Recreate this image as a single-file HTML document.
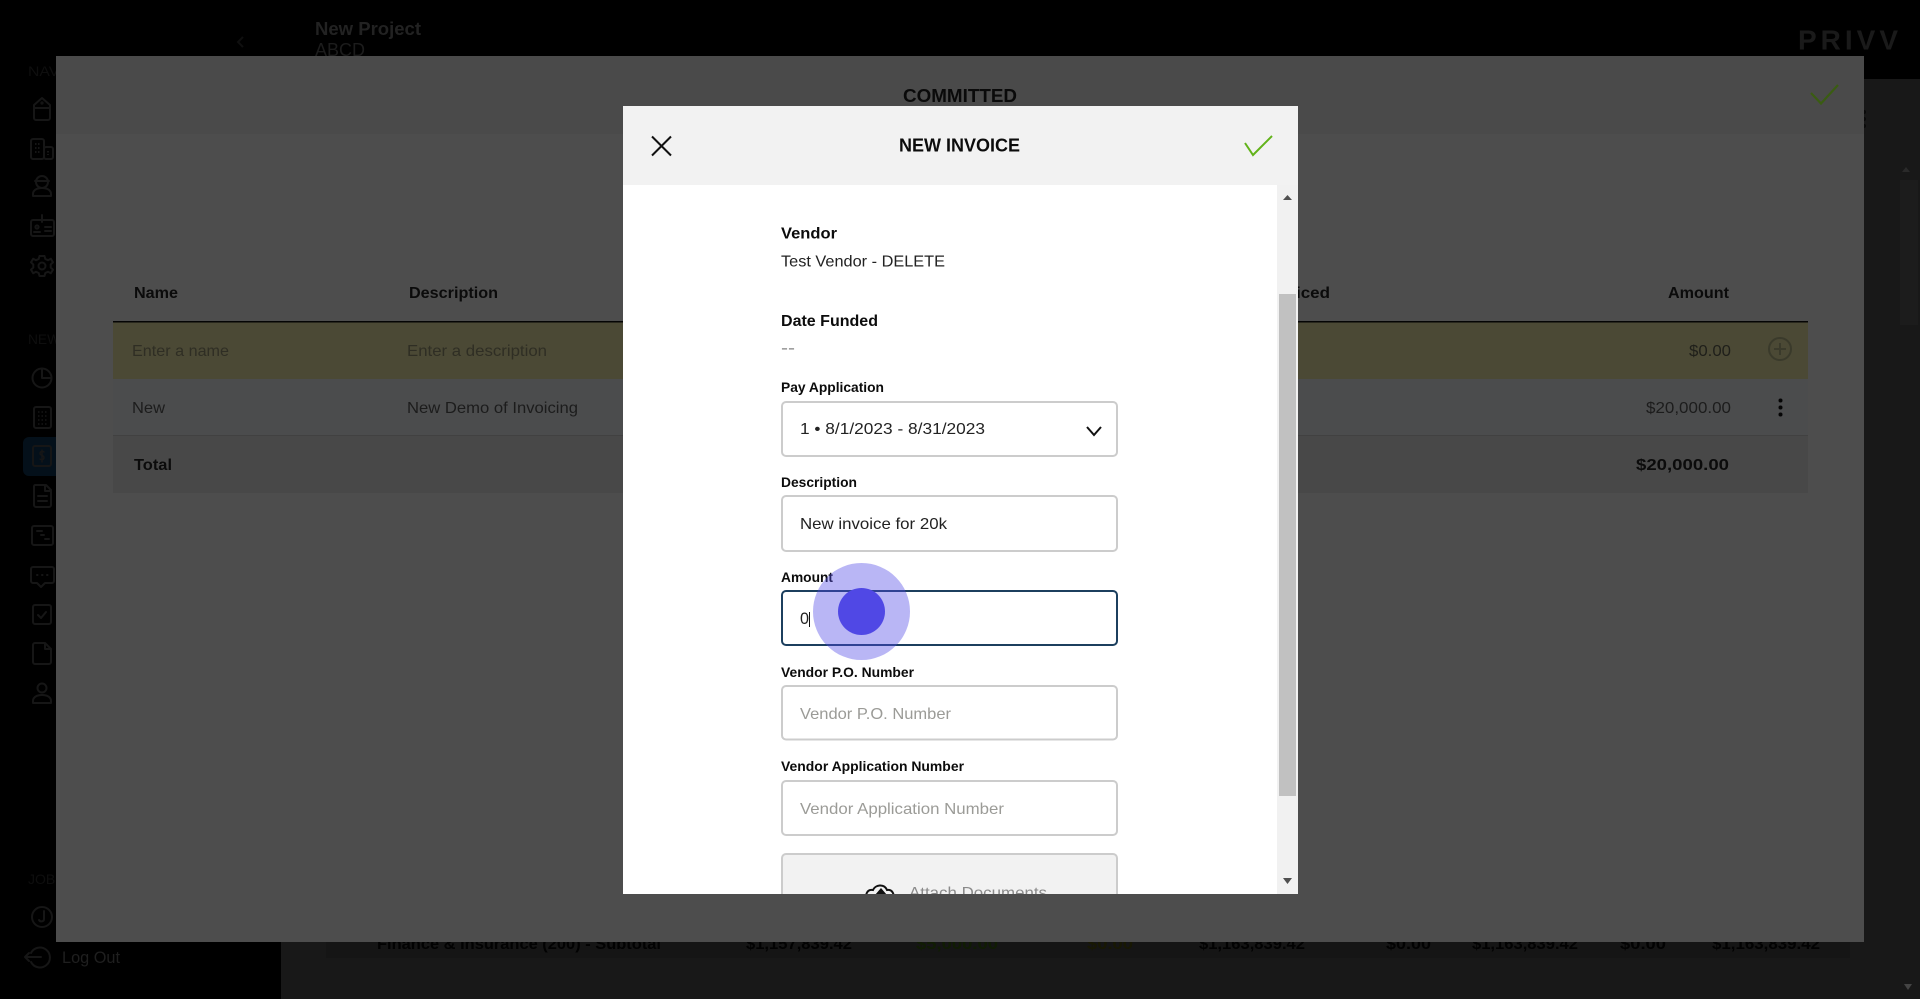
<!DOCTYPE html>
<html lang="en">
<head>
<meta charset="utf-8">
<title>New Invoice</title>
<style>
html,body{margin:0;padding:0;width:1920px;height:999px;overflow:hidden;background:#000}
svg{display:block}
text{font-family:"Liberation Sans",sans-serif;font-size:16px}
.b{font-weight:700}
.ic{fill:none;stroke:#161616;stroke-width:2;stroke-linecap:round;stroke-linejoin:round}
.lbl{font-size:14px;font-weight:700;fill:#0c0c0c}
.val{fill:#222}
.ph{fill:#9b9b97}
.box{fill:#fff;stroke:#ccc;stroke-width:2}
</style>
</head>
<body>
<svg width="1920" height="999" viewBox="0 0 1920 999" xmlns="http://www.w3.org/2000/svg">
<defs>
<clipPath id="inner"><rect x="623" y="106" width="675" height="788"/></clipPath>
</defs>

<!-- page background -->
<rect width="1920" height="999" fill="#181818"/>
<rect width="1920" height="79" fill="#000"/>
<rect width="281" height="999" fill="#000"/>

<!-- top bar -->
<path d="M243 37l-5 5 5 5" fill="none" stroke="#0f0f0f" stroke-width="2"/>
<text x="315" y="35" class="b" style="font-size:18px" fill="#222" textLength="106" lengthAdjust="spacingAndGlyphs">New Project</text>
<text x="315" y="56" style="font-size:18px" fill="#1c1c1c" textLength="50" lengthAdjust="spacingAndGlyphs">ABCD</text>
<text x="1798" y="49.500" class="b" style="font-size:28px;font-weight:700" fill="#1a1a1a" textLength="100" lengthAdjust="spacing">PRIVV</text>

<!-- main scrollbar and dots behind the modal -->
<rect x="1900" y="180" width="18" height="145" fill="#1c1c1c"/>
<path d="M1902 172l4-5 4 5z" fill="#2a2a2a"/>
<path d="M1904 984l4 6 4-6z" fill="#444"/>
<circle cx="1864" cy="112" r="2" fill="#0a0a0a"/><circle cx="1864" cy="119" r="2" fill="#0a0a0a"/><circle cx="1864" cy="126" r="2" fill="#0a0a0a"/>

<!-- subtotal row behind the modal -->
<rect x="326" y="900" width="1524" height="58" fill="#151515"/>
<text x="377" y="949" class="b" fill="#020202" textLength="284" lengthAdjust="spacingAndGlyphs">Finance &amp; Insurance (200) - Subtotal</text>
<text x="746" y="949" class="b" fill="#020202" textLength="106" lengthAdjust="spacingAndGlyphs">$1,157,839.42</text>
<text x="916" y="949" class="b" fill="#101c03" textLength="82" lengthAdjust="spacingAndGlyphs">$5,000.00</text>
<text x="1087" y="949" class="b" fill="#181803" textLength="46" lengthAdjust="spacingAndGlyphs">$0.00</text>
<text x="1199" y="949" class="b" fill="#020202" textLength="106" lengthAdjust="spacingAndGlyphs">$1,163,839.42</text>
<text x="1386" y="949" class="b" fill="#020202" textLength="45" lengthAdjust="spacingAndGlyphs">$0.00</text>
<text x="1472" y="949" class="b" fill="#020202" textLength="106" lengthAdjust="spacingAndGlyphs">$1,163,839.42</text>
<text x="1620" y="949" class="b" fill="#020202" textLength="46" lengthAdjust="spacingAndGlyphs">$0.00</text>
<text x="1712" y="949" class="b" fill="#020202" textLength="108" lengthAdjust="spacingAndGlyphs">$1,163,839.42</text>

<!-- sidebar -->
<text x="28" y="76" style="font-size:14px" fill="#0e0e0e" textLength="95" lengthAdjust="spacingAndGlyphs">NAVIGATION</text>
<text x="28" y="344" style="font-size:14px" fill="#0e0e0e" textLength="100" lengthAdjust="spacingAndGlyphs">NEW PROJECT</text>
<text x="28" y="884" style="font-size:14px" fill="#0e0e0e" textLength="70" lengthAdjust="spacingAndGlyphs">JOB COST</text>
<rect x="23" y="437" width="60" height="39" rx="6" fill="#04101a"/>
<g class="ic">
  <!-- tag -->
  <path d="M34 105l8-7 8 7v13a2 2 0 0 1-2 2H36a2 2 0 0 1-2-2z"/><path d="M34 108h16"/><circle cx="42" cy="103" r=".6"/>
  <!-- buildings -->
  <rect x="31" y="139" width="13" height="20" rx="2"/><rect x="44" y="147" width="9" height="12" rx="2"/><path d="M35 144h5M35 148h5M35 152h5M48 151v4" stroke-dasharray="1.500 1.500" stroke-linecap="butt"/>
  <!-- worker -->
  <circle cx="42" cy="182" r="6"/><path d="M35 181h14M33 196v-2c0-4 4-6 9-6s9 2 9 6v2z"/>
  <!-- id card -->
  <rect x="31" y="220" width="23" height="16" rx="2"/><path d="M42 215v7M45 227h6M45 231h6"/><circle cx="37" cy="227" r="1.600"/><path d="M34 232h6"/>
  <!-- gear -->
  <circle cx="42" cy="266" r="3.500"/><path d="M39.500 256h5l.8 3 2.700 1.200 2.800-1.500 2.200 3.600-2.300 2.200v3l2.300 2.200-2.200 3.600-2.800-1.500-2.700 1.200-.8 3h-5l-.8-3-2.700-1.200-2.800 1.500-2.200-3.600 2.300-2.200v-3l-2.300-2.200 2.200-3.600 2.800 1.500 2.700-1.200z"/>
  <!-- pie -->
  <circle cx="42" cy="378" r="9.500"/><path d="M42 369v9h9"/>
  <!-- calculator -->
  <rect x="34" y="407" width="17" height="21" rx="2"/><path d="M38 412h9M38 416h9M38 420h9M38 424h9" stroke-dasharray="1.500 2" stroke-linecap="butt" stroke-width="1.500"/>
  <!-- dollar -->
  <rect x="33" y="446" width="18" height="20" rx="2"/><path d="M44 452c-1-1-4-1-4 1.500s4 1.500 4 4-3 2.500-4 1.500M42 450v12" stroke-width="1.500"/>
  <!-- doc lines -->
  <path d="M35 485h11l5 5v15a2 2 0 0 1-2 2H36a2 2 0 0 1-2-2v-18a2 2 0 0 1 1-2z"/><path d="M45 485v6h6M38 496h9M38 501h9"/>
  <!-- terminal -->
  <rect x="32" y="526" width="21" height="19" rx="2"/><path d="M37 531h5M41 535h3M45 539h4"/>
  <!-- chat -->
  <path d="M33 567h19a2 2 0 0 1 2 2v12a2 2 0 0 1-2 2h-7l-4 4-4-4h-4a2 2 0 0 1-2-2v-12a2 2 0 0 1 2-2z"/><path d="M37 575h.5M42 575h.5M47 575h.5"/>
  <!-- check -->
  <rect x="33" y="605" width="18" height="19" rx="2"/><path d="M38 615l3 3 5-6"/>
  <!-- doc -->
  <path d="M35 643h10l6 6v13a2 2 0 0 1-2 2H35a2 2 0 0 1-2-2v-17a2 2 0 0 1 2-2z"/><path d="M45 643v6h6"/>
  <!-- person -->
  <circle cx="42" cy="688" r="4.500"/><path d="M33 703v-2c0-4 4-6 9-6s9 2 9 6v2z"/>
  <!-- J avatar -->
  <circle cx="42" cy="917" r="10"/><path d="M44 911v8c0 3-4 3-5 1"/>
  <!-- logout -->
  <path d="M31 953a10 10 0 1 1 0 9M25 957h16M25 957l4-4M25 957l4 4"/>
</g>
<text x="62" y="963" style="font-size:17px" fill="#1f1f1f" textLength="58" lengthAdjust="spacingAndGlyphs">Log Out</text>

<!-- outer modal -->
<rect x="56" y="56" width="1808" height="886" fill="#4d4d4d"/>
<rect x="56" y="56" width="1808" height="78" fill="#4a4a4a"/>
<text x="903" y="102" class="b" style="font-size:18px" fill="#0a0a0a" textLength="114" lengthAdjust="spacingAndGlyphs">COMMITTED</text>
<path d="M1811 93l10 10.500 17-18.500" fill="none" stroke="#3a5c12" stroke-width="2.200"/>

<!-- table -->
<text x="134" y="298" class="b" fill="#0b0b0b" textLength="44" lengthAdjust="spacingAndGlyphs">Name</text>
<text x="409" y="298" class="b" fill="#0b0b0b" textLength="89" lengthAdjust="spacingAndGlyphs">Description</text>
<text x="1296" y="298" class="b" fill="#0b0b0b" textLength="34" lengthAdjust="spacingAndGlyphs">iced</text>
<text x="1668" y="298" class="b" fill="#0b0b0b" textLength="61" lengthAdjust="spacingAndGlyphs">Amount</text>
<rect x="113" y="322" width="1695" height="57" fill="#4b4935"/>
<rect x="113" y="321" width="1695" height="1.500" fill="#050505"/>
<text x="132" y="356" fill="#2f2e24" textLength="97" lengthAdjust="spacingAndGlyphs">Enter a name</text>
<text x="407" y="356" fill="#2f2e24" textLength="140" lengthAdjust="spacingAndGlyphs">Enter a description</text>
<text x="1689" y="356" fill="#1f1f1a" textLength="42" lengthAdjust="spacingAndGlyphs">$0.00</text>
<circle cx="1780" cy="349" r="11" fill="none" stroke="#3a3a2b" stroke-width="2"/>
<path d="M1780 343v12M1774 349h12" stroke="#3a3a2b" stroke-width="2"/>
<rect x="113" y="379" width="1695" height="56" fill="#4b4c4d"/>
<text x="132" y="413" fill="#1c1c1c" textLength="33" lengthAdjust="spacingAndGlyphs">New</text>
<text x="407" y="413" fill="#1c1c1c" textLength="171" lengthAdjust="spacingAndGlyphs">New Demo of Invoicing</text>
<text x="1646" y="413" fill="#1c1c1c" textLength="85" lengthAdjust="spacingAndGlyphs">$20,000.00</text>
<circle cx="1780.500" cy="400.500" r="2" fill="#050505"/><circle cx="1780.500" cy="407.500" r="2" fill="#050505"/><circle cx="1780.500" cy="414.500" r="2" fill="#050505"/>
<rect x="113" y="435" width="1695" height="1" fill="#414141"/>
<rect x="113" y="436" width="1695" height="57" fill="#484848"/>
<text x="134" y="470" class="b" fill="#0b0b0b" textLength="38" lengthAdjust="spacingAndGlyphs">Total</text>
<text x="1636" y="470" class="b" fill="#0b0b0b" textLength="93" lengthAdjust="spacingAndGlyphs">$20,000.00</text>

<!-- inner modal -->
<g clip-path="url(#inner)">
<rect x="623" y="106" width="675" height="788" fill="#fff"/>
<rect x="623" y="106" width="675" height="79" fill="#f2f2f2"/>
<path d="M652 136.500l19 19M671 136.500l-19 19" stroke="#111" stroke-width="2" fill="none"/>
<text x="899" y="151.500" class="b" style="font-size:18px" fill="#0c0c0c" textLength="121" lengthAdjust="spacingAndGlyphs">NEW INVOICE</text>
<path d="M1245 143l8 12 19-19" fill="none" stroke="#62b31a" stroke-width="2"/>

<!-- scrollbar -->
<rect x="1277" y="185" width="21" height="709" fill="#f1f1f1"/>
<rect x="1279" y="294" width="17" height="502" fill="#c1c1c1"/>
<path d="M1283 200l4.500-5 4.500 5z" fill="#505050"/>
<path d="M1283 878l4.500 6 4.500-6z" fill="#505050"/>

<text x="781" y="238.500" class="b" fill="#0c0c0c" textLength="56" lengthAdjust="spacingAndGlyphs">Vendor</text>
<text x="781" y="266.500" class="val" textLength="164" lengthAdjust="spacingAndGlyphs">Test Vendor - DELETE</text>
<text x="781" y="326" class="b" fill="#0c0c0c" textLength="97" lengthAdjust="spacingAndGlyphs">Date Funded</text>
<text x="781" y="353" fill="#808080" textLength="14" lengthAdjust="spacingAndGlyphs">--</text>

<text x="781" y="392" class="lbl" textLength="103" lengthAdjust="spacingAndGlyphs">Pay Application</text>
<rect class="box" x="782" y="402" width="335" height="54" rx="4"/>
<text x="800" y="434" class="val" textLength="185" lengthAdjust="spacingAndGlyphs">1 • 8/1/2023 - 8/31/2023</text>
<path d="M1087 427l7 8 7-8" fill="none" stroke="#111" stroke-width="2"/>

<text x="781" y="487" class="lbl" textLength="76" lengthAdjust="spacingAndGlyphs">Description</text>
<rect class="box" x="782" y="496" width="335" height="55" rx="4"/>
<text x="800" y="529" class="val" textLength="147" lengthAdjust="spacingAndGlyphs">New invoice for 20k</text>

<text x="781" y="582" class="lbl" textLength="52" lengthAdjust="spacingAndGlyphs">Amount</text>
<rect x="782" y="591" width="335" height="54" rx="4" fill="#fff" stroke="#1c3f5e" stroke-width="2"/>
<text x="800" y="624" class="val" style="font-size:17px" textLength="9" lengthAdjust="spacingAndGlyphs">0</text>
<rect x="809" y="612" width="1" height="15" fill="#111"/>

<text x="781" y="677" class="lbl" textLength="133" lengthAdjust="spacingAndGlyphs">Vendor P.O. Number</text>
<rect class="box" x="782" y="686" width="335" height="53.500" rx="4"/>
<text x="800" y="719" class="ph" textLength="151" lengthAdjust="spacingAndGlyphs">Vendor P.O. Number</text>

<text x="781" y="771" class="lbl" textLength="183" lengthAdjust="spacingAndGlyphs">Vendor Application Number</text>
<rect class="box" x="782" y="781" width="335" height="54" rx="4"/>
<text x="800" y="814" class="ph" textLength="204" lengthAdjust="spacingAndGlyphs">Vendor Application Number</text>

<rect x="782" y="854" width="335" height="60" rx="4" fill="#f2f2f2" stroke="#ccc" stroke-width="2"/>
<path d="M868 900c-4-6 0-11 5-10 2-5 11-7 14 0 5-1 8 4 6 10" fill="none" stroke="#111" stroke-width="2"/>
<path d="M881 888l-6 7h12z" fill="#111"/>
<text x="909" y="898" fill="#8a8a8a" textLength="138" lengthAdjust="spacingAndGlyphs">Attach Documents</text>
</g>

<!-- click indicator -->
<circle cx="861.500" cy="611.500" r="48.500" fill="#5048e5" fill-opacity=".4"/>
<circle cx="861.500" cy="611.500" r="23.500" fill="#5048e5"/>
</svg>
</body>
</html>
